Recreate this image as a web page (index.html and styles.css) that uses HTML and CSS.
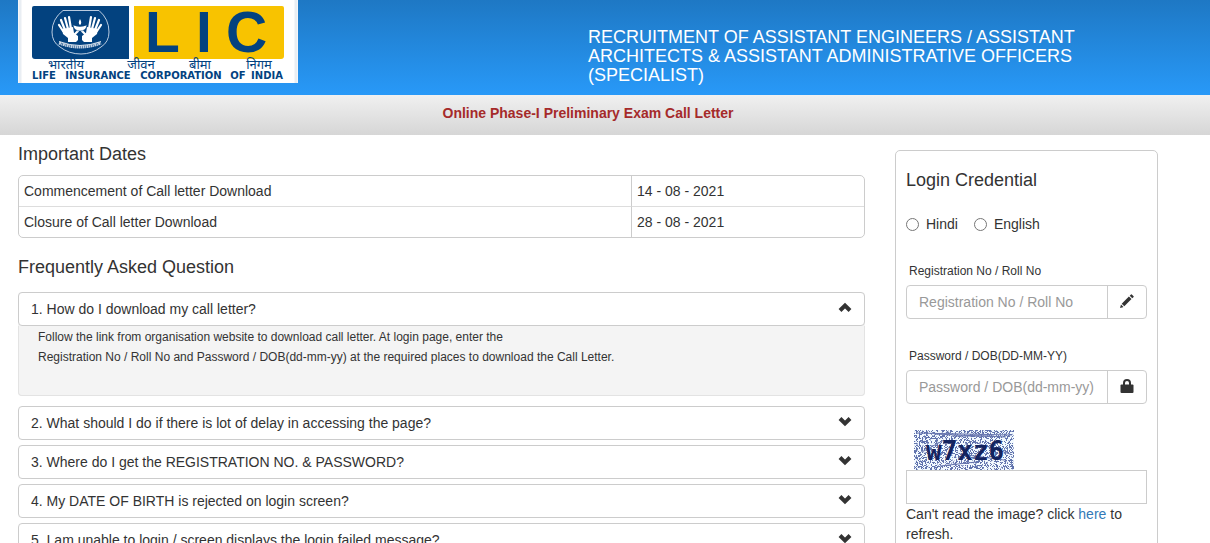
FILE: index.html
```
<!DOCTYPE html>
<html lang="en">

<head>
    <meta charset="UTF-8">
    <meta name="viewport" content="width=device-width, initial-scale=1.0">
    <title>Call Letter Download</title>
    <link rel="stylesheet" href="styles.css">
</head>

<body>
    <header class="header">
        <div class="logo">
            <svg width="280" height="83" viewBox="0 0 280 83" role="img" aria-label="LIC">
                <rect width="280" height="83" fill="#fff"/>
                <path d="M2 0V83M278 0V83" stroke="#e9eef3" stroke-width="3"/>
                <path d="M16 6H111V59H17Q14 59 14 56V8Q14 6 16 6Z" fill="#03427f"/>
                <path d="M116 6H264Q266 6 266 8V56Q266 59 263 59H116Z" fill="#f8c300"/>
                <!-- emblem -->
                <path d="M45 10.500H81Q91 19 91 32Q91 42 83 47Q74 54 63 54Q51 54 42 47Q34 42 34 32Q34 19 45 10.500Z" fill="none" stroke="#b9cbe0" stroke-width="1"/>
                <g>
                    <path d="M44 29L55 27L56 33L60 36V40L58 42H50V38L45 34Z" fill="#fff"/>
                    <path d="M45 31L41 25M47 30L43 20M50 29L47 18M53 29L51 17M56 35L60 31" fill="none" stroke="#fff" stroke-width="2.200" stroke-linecap="round"/>
                </g>
                <g transform="translate(124 0) scale(-1 1)">
                    <path d="M44 29L55 27L56 33L60 36V40L58 42H50V38L45 34Z" fill="#fff"/>
                    <path d="M45 31L41 25M47 30L43 20M50 29L47 18M53 29L51 17M56 35L60 31" fill="none" stroke="#fff" stroke-width="2.200" stroke-linecap="round"/>
                </g>
                <path d="M55 25Q62 28 69 25Q68 31 62 31Q56 31 55 25Z" fill="#fff" stroke="#03427f" stroke-width=".500"/>
                <path d="M62 19Q64.500 23 62 25Q59.500 23 62 19Z" fill="#fff"/>
                <path d="M41 43Q62 51 83 43" fill="none" stroke="#c3d2e3" stroke-width="3" stroke-dasharray="2 .500 1 .500"/>
                <path d="M41 41.500Q62 49.500 83 41.500" fill="none" stroke="#fff" stroke-width=".800"/>
                <text class="logo-lic" x="127 178 208" y="52">LIC</text>
                <g class="logo-hindi">
                    <text x="48" y="69">भारतीय</text>
                    <text x="123" y="69">जीवन</text>
                    <text x="182" y="69">बीमा</text>
                    <text x="241" y="69">निगम</text>
                </g>
                <g class="logo-name">
                    <text x="26" y="79">LIFE</text>
                    <text x="80" y="79">INSURANCE</text>
                    <text x="163" y="79">CORPORATION</text>
                    <text x="220" y="79">OF</text>
                    <text x="249" y="79">INDIA</text>
                </g>
            </svg>
        </div>
        <h1 class="title">RECRUITMENT OF ASSISTANT ENGINEERS / ASSISTANT ARCHITECTS &amp; ASSISTANT ADMINISTRATIVE OFFICERS (SPECIALIST)</h1>
    </header>
    <div class="subheader">Online Phase-I Preliminary Exam Call Letter</div>

    <div class="container">
        <main>
            <h2>Important Dates</h2>
            <table class="dates">
                <tr>
                    <td>Commencement of Call letter Download</td>
                    <td class="date">14 - 08 - 2021</td>
                </tr>
                <tr>
                    <td>Closure of Call letter Download</td>
                    <td class="date">28 - 08 - 2021</td>
                </tr>
            </table>

            <h2>Frequently Asked Question</h2>
            <div class="faq">
                <div class="faq-item open">
                    <button type="button" class="question" aria-expanded="true">
                        <span>1. How do I download my call letter?</span>
                        <svg class="chevron" width="14" height="14" viewBox="0 0 14 14"><path d="M2 9.500L7 4.500L12 9.500"/></svg>
                    </button>
                    <div class="answer">
                        Follow the link from organisation website to download call letter. At login page, enter the<br>
                        Registration No / Roll No and Password / DOB(dd-mm-yy) at the required places to download the Call Letter.
                    </div>
                </div>
                <div class="faq-item">
                    <button type="button" class="question" aria-expanded="false">
                        <span>2. What should I do if there is lot of delay in accessing the page?</span>
                        <svg class="chevron" width="14" height="14" viewBox="0 0 14 14"><path d="M2 3.500L7 8.500L12 3.500"/></svg>
                    </button>
                </div>
                <div class="faq-item">
                    <button type="button" class="question" aria-expanded="false">
                        <span>3. Where do I get the REGISTRATION NO. &amp; PASSWORD?</span>
                        <svg class="chevron" width="14" height="14" viewBox="0 0 14 14"><path d="M2 3.500L7 8.500L12 3.500"/></svg>
                    </button>
                </div>
                <div class="faq-item">
                    <button type="button" class="question" aria-expanded="false">
                        <span>4. My DATE OF BIRTH is rejected on login screen?</span>
                        <svg class="chevron" width="14" height="14" viewBox="0 0 14 14"><path d="M2 3.500L7 8.500L12 3.500"/></svg>
                    </button>
                </div>
                <div class="faq-item">
                    <button type="button" class="question" aria-expanded="false">
                        <span>5. I am unable to login / screen displays the login failed message?</span>
                        <svg class="chevron" width="14" height="14" viewBox="0 0 14 14"><path d="M2 3.500L7 8.500L12 3.500"/></svg>
                    </button>
                </div>
            </div>
        </main>

        <form class="login">
            <h2>Login Credential</h2>
            <div class="languages">
                <label><input type="radio" name="lang" value="hindi">Hindi</label>
                <label><input type="radio" name="lang" value="english">English</label>
            </div>

            <label class="field-label" for="regno">Registration No / Roll No</label>
            <div class="input-group">
                <input type="text" id="regno" placeholder="Registration No / Roll No">
                <span class="addon">
                    <svg width="14" height="14" viewBox="0 0 14 14" fill="#333"><path d="M0 14L1 10.500L3.500 13ZM1.700 9.700L8.900 2.500L11.500 5.100L4.300 12.300ZM9.700 1.700L11 .400Q11.400 0 11.800 .400L13.600 2.200Q14 2.600 13.600 3L12.300 4.300Z"/></svg>
                </span>
            </div>

            <label class="field-label" for="password">Password / DOB(DD-MM-YY)</label>
            <div class="input-group">
                <input type="password" id="password" placeholder="Password / DOB(dd-mm-yy)">
                <span class="addon">
                    <svg width="14" height="14" viewBox="0 0 14 14"><path d="M1.500 5.500H12.500Q13.500 5.500 13.500 6.500V13Q13.500 14 12.500 14H1.500Q.500 14 .500 13V6.500Q.500 5.500 1.500 5.500Z" fill="#333"/><path d="M4 7V4Q4 1 7 1Q10 1 10 4V7" fill="none" stroke="#333" stroke-width="2"/></svg>
                </span>
            </div>

            <svg class="captcha" width="100" height="40" viewBox="0 0 100 40">
                <filter id="noise" x="0" y="0" width="1" height="1">
                    <feTurbulence type="turbulence" baseFrequency="0.8" numOctaves="2" seed="6"/>
                    <feColorMatrix values="0 0 0 0 .12  0 0 0 0 .17  0 0 0 0 .42  20 0 0 0 -5"/>
                </filter>
                <rect width="100" height="40" fill="#f3faff"/>
                <rect width="100" height="40" filter="url(#noise)"/>
                <path d="M2 3L98 5M20 4L92 7M38 6H80M8 22L30 10M46 24L90 30M26 36L62 32M60 12L96 24" fill="none" stroke="#6675ae"/>
                <text x="12" y="30">w7xz6</text>
            </svg>
            <input type="text" class="captcha-input" aria-label="Captcha">
            <p class="refresh">Can't read the image? click <a href="#">here</a> to refresh.</p>
        </form>
    </div>
</body>

</html>
```

FILE: styles.css
```
* {
    box-sizing: border-box;
}

body {
    margin: 0;
    font-family: Arial, "Liberation Sans", sans-serif;
    font-size: 14px;
    line-height: 20px;
    color: #333;
    background-color: #fff;
}

h1,
h2 {
    margin: 0;
    font-size: 18px;
    font-weight: normal;
}

button,
input {
    font-family: inherit;
    font-size: 14px;
    color: inherit;
}

.header {
    display: grid;
    grid-template-columns: 1fr 1fr;
    height: 95px;
    padding: 0 52px 0 18px;
    background: linear-gradient(#1e78c4, #2899f8);
}

.logo svg {
    display: block;
}

.logo-lic {
    font-size: 57px;
    font-weight: bold;
    fill: #03427f;
}

.logo-hindi {
    font-family: "Noto Sans Devanagari", "Noto Sans", sans-serif;
    font-size: 13px;
    text-anchor: middle;
    fill: #03427f;
}

.logo-name {
    font-family: "DejaVu Sans", sans-serif;
    font-size: 10px;
    font-weight: bold;
    text-anchor: middle;
    fill: #03427f;
}

.title {
    padding-top: 28px;
    line-height: 19px;
    color: #fff;
}

.subheader {
    height: 40px;
    padding: 8px 52px 0 18px;
    font-weight: bold;
    text-align: center;
    color: #a52a2a;
    background: linear-gradient(#f0f0f0, #d6d6d6);
}

.container {
    display: grid;
    grid-template-columns: 1fr 263px;
    gap: 30px;
    padding: 0 52px 0 18px;
}

main {
    padding-top: 9px;
}

.dates {
    width: 100%;
    margin: 11px 0 19px;
    border: 1px solid #ccc;
    border-radius: 5px;
    border-spacing: 0;
}

.dates td {
    padding: 5px;
}

.dates tr + tr td {
    border-top: 1px solid #ddd;
}

.dates .date {
    width: 233px;
    border-left: 1px solid #ccc;
}

.faq {
    display: flex;
    flex-direction: column;
    gap: 5px;
    margin-top: 15px;
}

.faq-item.open {
    margin-bottom: 5px;
    border-radius: 4px;
    background-color: #f4f4f4;
}

.question {
    display: flex;
    justify-content: space-between;
    width: 100%;
    height: 34px;
    padding: 6px 12px;
    line-height: 20px;
    text-align: left;
    border: 1px solid #ccc;
    border-radius: 4px;
    background-color: #fff;
}

.chevron {
    margin-top: 2px;
    fill: none;
    stroke: #333;
    stroke-width: 4;
}

.answer {
    height: 70px;
    padding: 1px 19px;
    font-size: 12px;
    border: 1px solid #e3e3e3;
    border-top: 0;
    border-radius: 0 0 4px 4px;
}

.login {
    margin-top: 15px;
    padding: 19px 10px;
    border: 1px solid #ccc;
    border-radius: 5px;
}

.languages {
    display: flex;
    gap: 16px;
    margin: 24px 0 27px;
}

.languages label {
    display: flex;
    align-items: center;
    gap: 7px;
}

.languages input {
    margin: 0;
}

.field-label {
    display: block;
    padding: 0 3px;
    margin-bottom: 4px;
    font-size: 12px;
}

.input-group {
    display: flex;
    height: 34px;
    margin-bottom: 27px;
    border: 1px solid #ccc;
    border-radius: 4px;
}

.input-group input {
    flex: 1;
    min-width: 0;
    padding: 6px 12px;
    border: 0;
    background: none;
}

.input-group input::placeholder {
    color: #999;
}

.addon {
    padding: 8px 12px;
    line-height: 14px;
    border-left: 1px solid #ccc;
}

.captcha {
    display: block;
    margin: -1px 0 0 8px;
    font-family: "DejaVu Sans Mono", monospace;
    font-size: 26px;
    font-weight: bold;
    fill: #14245f;
}

.captcha-input {
    display: block;
    width: 100%;
    height: 34px;
    padding: 6px 12px;
    border: 1px solid #ccc;
}

.refresh {
    margin: 0;
}

a {
    color: #337ab7;
    text-decoration: none;
}
```
